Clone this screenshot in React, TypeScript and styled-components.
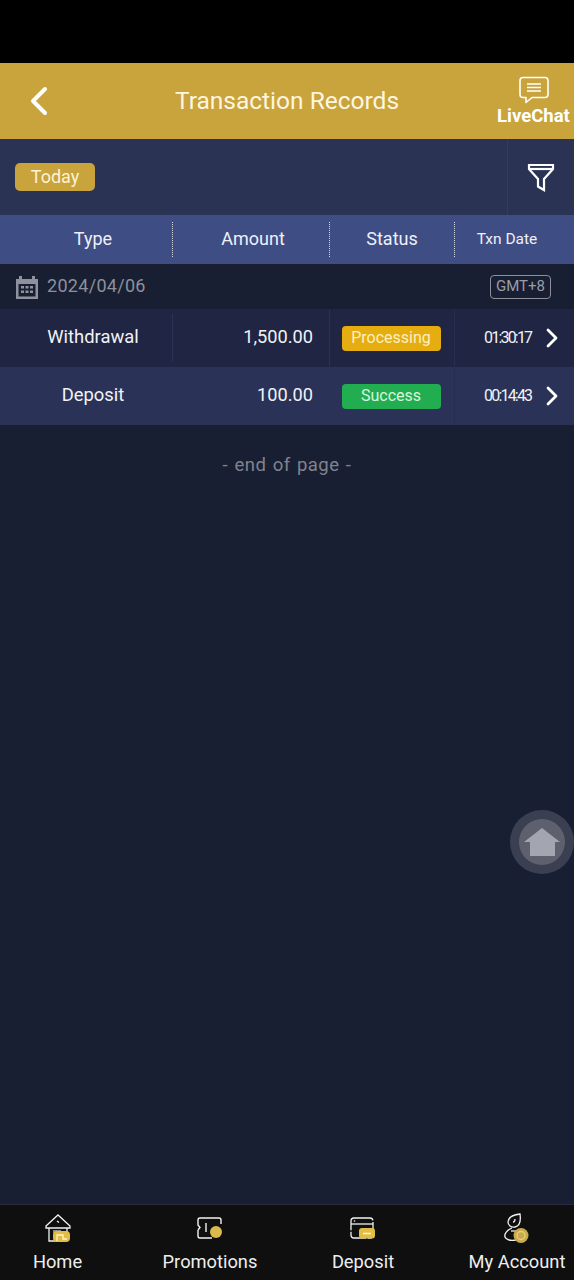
import React from "react";
import styled, { createGlobalStyle } from "styled-components";

const records = [
  { type: "Withdrawal", amount: "1,500.00", status: "Processing", time: "01:30:17" },
  { type: "Deposit", amount: "100.00", status: "Success", time: "00:14:43" },
];

const HomeIcon = () => (
  <svg width="30" height="30" viewBox="0 0 30 30" fill="none" stroke="#f2f2f2" strokeWidth="1.3">
    <path d="M3 13 15 2l12 11v2H3z" />
    <path d="M6 15v13h8M24 15v4" />
    <path d="M14 8l2 1.500" />
    <rect x="10" y="17" width="8" height="3" fill="#8a8a8a" stroke="none" />
    <rect x="10" y="18" width="17" height="11" rx="4" fill="#e2bd45" stroke="none" />
    <path d="M14 28v-6h6v4h4" stroke="#fff3c0" />
  </svg>
);

const PromoIcon = () => (
  <svg width="30" height="30" viewBox="0 0 30 30" fill="none" stroke="#f2f2f2" strokeWidth="1.4">
    <path d="M5 5h19c1.500 0 2 1 2 2v4M3 17l2-2.500L3 12V7c0-1 1-2 2-2M3 17v6c0 1 1 2 2 2h12" />
    <path d="M11 10v9" />
    <circle cx="21" cy="19" r="6" fill="#d8bb4c" stroke="none" />
  </svg>
);

const DepositIcon = () => (
  <svg width="30" height="30" viewBox="0 0 30 30" fill="none" stroke="#f2f2f2" strokeWidth="1.3">
    <rect x="3" y="5" width="22" height="20" rx="3" strokeDasharray="20 1.500" />
    <path d="M3 11h22" />
    <circle cx="6.500" cy="8" r=".8" fill="#f2f2f2" stroke="none" />
    <rect x="11" y="15" width="16" height="10.500" rx="3" fill="#e2bd45" stroke="none" />
    <path d="M15 20.500h8" stroke="#fff3c0" strokeWidth="1.600" />
  </svg>
);

const AccountIcon = () => (
  <svg width="30" height="30" viewBox="0 0 30 30" fill="none" stroke="#f2f2f2" strokeWidth="1.3">
    <path d="M6 9c0-4 4-7 12-8 1 7 0 12-5 13-4 1-7-2-7-5z" />
    <path d="M13 6c0 2-1 3-2 3" />
    <path d="M10 15C5 17 2 21 3 24c1 3 6 4 11 3" />
    <path d="M9 18h7" />
    <circle cx="19" cy="22.500" r="7.500" fill="#c9a94a" stroke="none" />
    <circle cx="19" cy="22.500" r="4" stroke="#e6d27d" />
  </svg>
);

const navItems = [
  { label: "Home", icon: <HomeIcon />, width: 115 },
  { label: "Promotions", icon: <PromoIcon />, width: 190 },
  { label: "Deposit", icon: <DepositIcon />, width: 116 },
  { label: "My Account", icon: <AccountIcon />, width: 114 },
];

export default function App() {
  return (
    <Page>
      <GlobalStyle />
      <StatusBar />
      <Header>
        <BackButton>
          <svg width="20" height="30" viewBox="0 0 20 30" fill="none" stroke="#fff" strokeWidth="4" strokeLinecap="round" strokeLinejoin="round">
            <path d="M16 3 4 15l12 12" />
          </svg>
        </BackButton>
        <Title>Transaction Records</Title>
        <LiveChat>
          <svg width="32" height="28" viewBox="0 0 32 28" fill="none" stroke="#fff" strokeWidth="1.600" strokeLinejoin="round">
            <path d="M5 1.500h22a3 3 0 0 1 3 3v14a3 3 0 0 1-3 3H14l-6 5v-5H5a3 3 0 0 1-3-3v-14a3 3 0 0 1 3-3z" />
            <path d="M9 8h14M9 11.500h14M9 15h14" />
          </svg>
          <LiveChatLabel>LiveChat</LiveChatLabel>
        </LiveChat>
      </Header>
      <FilterBar>
        <FilterMain>
          <TodayChip>Today</TodayChip>
        </FilterMain>
        <FilterButton>
          <svg width="28" height="30" viewBox="0 0 28 30" fill="none" stroke="#fff" strokeWidth="2.200">
            <path d="M2 3h24v4L17 17v11l-6-3.500V17L2 7z" />
            <path d="M2 7h24" />
          </svg>
        </FilterButton>
      </FilterBar>
      <TableHead>
        <HeadCell $pad="0 0 2px 14px">Type</HeadCell>
        <HeadCell $pad="0 0 2px 4px">Amount</HeadCell>
        <HeadCell $pad="0 0 2px 0">Status</HeadCell>
        <HeadCell $small $pad="0 15px 2px 0">Txn Date</HeadCell>
      </TableHead>
      <DateRow>
        <DateGroup>
          <svg width="24" height="24" viewBox="0 0 24 24" fill="#8f929c">
            <path d="M1 4h3V1h3v3h10V1h3v3h3v20H1zM3.500 9v12.500h17V9z" fillRule="evenodd" />
            <path d="M6 11h3v2.500H6zM10.500 11h3v2.500h-3zM15 11h3v2.500h-3zM6 15.500h3V18H6zM10.500 15.500h3V18h-3zM15 15.500h3V18h-3z" />
          </svg>
          <DateText>2024/04/06</DateText>
        </DateGroup>
        <ZoneTag>GMT+8</ZoneTag>
      </DateRow>
      {records.map((r, i) => (
        <Row key={r.time} $alt={i % 2 === 1}>
          <TypeCell>{r.type}</TypeCell>
          <AmountCell>{r.amount}</AmountCell>
          <StatusCell>
            <StatusPill $status={r.status}>{r.status}</StatusPill>
          </StatusCell>
          <TimeCell>
            <TimeText>{r.time}</TimeText>
            <svg width="14" height="20" viewBox="0 0 14 20" fill="none" stroke="#fff" strokeWidth="2.800" strokeLinecap="round" strokeLinejoin="round">
              <path d="M3 2l8 8-8 8" />
            </svg>
          </TimeCell>
        </Row>
      ))}
      <EndOfPage>- end of page -</EndOfPage>
      <FloatingHome>
        <FloatingInner>
          <svg width="36" height="28" viewBox="0 0 36 28" fill="#a3a6b0">
            <path d="M18 0 36 14h-5v14H6V14H0z" />
          </svg>
        </FloatingInner>
      </FloatingHome>
      <BottomNav>
        {navItems.map((item) => (
          <NavItem key={item.label} $width={item.width}>
            <NavIcon>{item.icon}</NavIcon>
            <NavLabel>{item.label}</NavLabel>
          </NavItem>
        ))}
      </BottomNav>
    </Page>
  );
}

const GlobalStyle = createGlobalStyle`
  html, body {
    margin: 0;
    padding: 0;
    background: #191f33;
  }
  * {
    box-sizing: border-box;
  }
`;

const Page = styled.div`
  position: relative;
  display: flex;
  flex-direction: column;
  width: 574px;
  height: 1280px;
  overflow: hidden;
  background: #191f33;
  font-family: Roboto, "Liberation Sans", sans-serif;
  color: #fff;
`;

const StatusBar = styled.div`
  height: 63px;
  background: #000;
`;

const Header = styled.header`
  display: flex;
  align-items: center;
  height: 76px;
  background: #c9a33c;
`;

const BackButton = styled.div`
  display: flex;
  align-items: center;
  justify-content: center;
  width: 78px;
`;

const Title = styled.h1`
  flex: 1;
  margin: 0;
  padding-bottom: 2px;
  text-align: center;
  font-size: 24.5px;
  font-weight: 400;
  color: #fdf6e0;
`;

const LiveChat = styled.div`
  display: flex;
  flex-direction: column;
  align-items: center;
  width: 78px;
  padding-right: 3px;
`;

const LiveChatLabel = styled.span`
  margin-top: 2px;
  font-size: 18.5px;
  font-weight: 700;
  line-height: 21px;
  white-space: nowrap;
`;

const FilterBar = styled.div`
  display: flex;
  height: 76px;
  background: #2a3354;
`;

const FilterMain = styled.div`
  display: flex;
  flex: 1;
  align-items: center;
  padding-left: 15px;
`;

const TodayChip = styled.span`
  display: flex;
  align-items: center;
  justify-content: center;
  width: 80px;
  height: 28px;
  padding-bottom: 2px;
  border-radius: 5px;
  background: #c9a33c;
  color: #fdf3d4;
  font-size: 18px;
`;

const FilterButton = styled.div`
  display: flex;
  align-items: center;
  justify-content: center;
  width: 67px;
  border-left: 1px solid #333c5f;
`;

const columns = "173px 157px 125px 119px";

const TableHead = styled.div`
  display: grid;
  grid-template-columns: ${columns};
  align-items: center;
  height: 49px;
  background: #3f4d85;
`;

const HeadCell = styled.div<{ $small?: boolean; $pad: string }>`
  display: flex;
  align-items: center;
  justify-content: center;
  height: 35px;
  padding: ${(p) => p.$pad};
  font-size: ${(p) => (p.$small ? "15.5px" : "18px")};
  color: #eef0f8;

  &:not(:last-child) {
    border-right: 1px dotted #d5d9ea;
  }
`;

const DateRow = styled.div`
  display: flex;
  align-items: center;
  justify-content: space-between;
  height: 45px;
  padding: 0 23px 0 15px;
  background: #191f33;
`;

const DateGroup = styled.div`
  display: flex;
  align-items: center;
  gap: 8px;
`;

const DateText = styled.span`
  padding-bottom: 2px;
  font-size: 18px;
  letter-spacing: 0.3px;
  color: #8d909b;
`;

const ZoneTag = styled.span`
  display: flex;
  align-items: center;
  justify-content: center;
  width: 61px;
  height: 24px;
  padding-bottom: 1px;
  border: 1px solid #8d909b;
  border-radius: 4px;
  font-size: 15px;
  color: #9a9da7;
`;

const Row = styled.div<{ $alt: boolean }>`
  display: grid;
  grid-template-columns: ${columns};
  height: 58px;
  background: ${(p) => (p.$alt ? "#2a3357" : "#1f2543")};
`;

const TypeCell = styled.div`
  display: flex;
  align-items: center;
  justify-content: center;
  margin: 5px 0;
  padding: 0 0 3px 14px;
  font-size: 18.4px;
  color: #f1f2f6;
  border-right: 1px solid #2b3253;
`;

const AmountCell = styled.div`
  display: flex;
  align-items: center;
  justify-content: flex-end;
  padding: 0 16px 3px 0;
  font-size: 18.2px;
  color: #f1f2f6;
  border-right: 1px solid #2b3253;
`;

const StatusCell = styled.div`
  display: flex;
  align-items: center;
  justify-content: center;
  padding-right: 2px;
  border-right: 1px solid #262d4d;
`;

const StatusPill = styled.span<{ $status: string }>`
  display: flex;
  align-items: center;
  justify-content: center;
  width: 99px;
  height: 25px;
  padding-bottom: 1px;
  border-radius: 4px;
  font-size: 16px;
  background: ${(p) => (p.$status === "Success" ? "#22ae50" : "#e6ad10")};
  color: ${(p) => (p.$status === "Success" ? "#d8f5de" : "#fdf0c0")};
`;

const TimeCell = styled.div`
  display: flex;
  align-items: center;
  padding-left: 29px;
  gap: 14px;
`;

const TimeText = styled.span`
  width: 47px;
  padding-bottom: 1px;
  font-size: 16px;
  letter-spacing: -1.8px;
  white-space: nowrap;
  color: #f1f2f6;
`;

const EndOfPage = styled.div`
  margin-top: 28px;
  text-align: center;
  font-size: 18.5px;
  line-height: 24px;
  letter-spacing: 0.5px;
  word-spacing: 1.2px;
  color: #80838e;
`;

const FloatingHome = styled.div`
  position: absolute;
  left: 510px;
  top: 810px;
  display: flex;
  align-items: center;
  justify-content: center;
  width: 64px;
  height: 64px;
  border-radius: 50%;
  background: #3a3f51;
`;

const FloatingInner = styled.div`
  display: flex;
  align-items: center;
  justify-content: center;
  width: 46px;
  height: 46px;
  border-radius: 50%;
  background: #5e616d;
`;

const BottomNav = styled.nav`
  position: absolute;
  left: 0;
  bottom: 0;
  display: flex;
  width: 100%;
  height: 76px;
  border-top: 1px solid #262b3d;
  background: #0f0f0f;
`;

const NavItem = styled.div<{ $width: number }>`
  display: flex;
  flex-direction: column;
  align-items: center;
  width: ${(p) => p.$width}px;
  padding-top: 8px;

  &:last-child {
    margin-left: auto;
  }
`;

const NavIcon = styled.div`
  height: 37px;
`;

const NavLabel = styled.span`
  font-size: 18.3px;
  line-height: 24px;
  color: #eeeeee;
  white-space: nowrap;
`;
